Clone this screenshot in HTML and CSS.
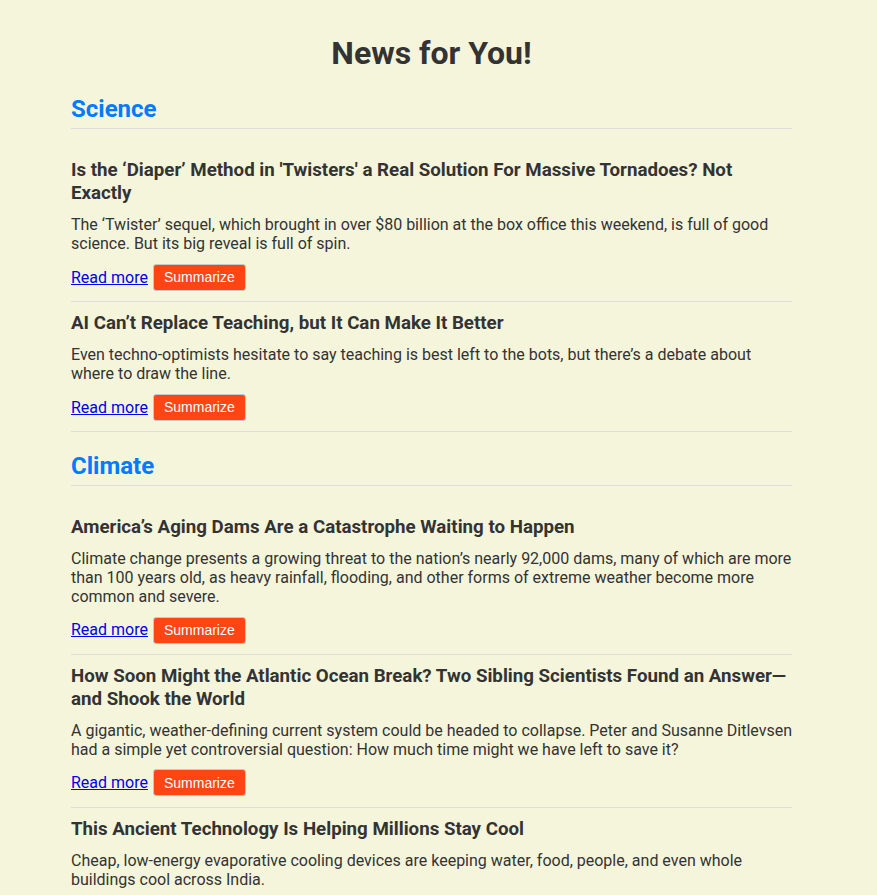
FILE: index.html
```html
<!DOCTYPE html>
<html lang="en">
<head>
<meta charset="utf-8">
<title>News for You!</title>
<link rel="stylesheet" href="styles.css">
</head>
<body>
<main class="page">
  <h1 class="title">News for You!</h1>

  <section class="category">
    <h2 class="category-title">Science</h2>
    <article class="story">
      <h3 class="story-title">Is the ‘Diaper’ Method in 'Twisters' a Real Solution For Massive Tornadoes? Not Exactly</h3>
      <p class="story-desc">The ‘Twister’ sequel, which brought in over $80 billion at the box office this weekend, is full of good science. But its big reveal is full of spin.</p>
      <div class="story-actions"><a href="#" class="read-more">Read more</a><button class="summarize">Summarize</button></div>
    </article>
    <article class="story">
      <h3 class="story-title">AI Can’t Replace Teaching, but It Can Make It Better</h3>
      <p class="story-desc">Even techno-optimists hesitate to say teaching is best left to the bots, but there’s a debate about where to draw the line.</p>
      <div class="story-actions"><a href="#" class="read-more">Read more</a><button class="summarize">Summarize</button></div>
    </article>
  </section>

  <section class="category">
    <h2 class="category-title">Climate</h2>
    <article class="story">
      <h3 class="story-title">America’s Aging Dams Are a Catastrophe Waiting to Happen</h3>
      <p class="story-desc">Climate change presents a growing threat to the nation’s nearly 92,000 dams, many of which are more than 100 years old, as heavy rainfall, flooding, and other forms of extreme weather become more common and severe.</p>
      <div class="story-actions"><a href="#" class="read-more">Read more</a><button class="summarize">Summarize</button></div>
    </article>
    <article class="story">
      <h3 class="story-title">How Soon Might the Atlantic Ocean Break? Two Sibling Scientists Found an Answer—and Shook the World</h3>
      <p class="story-desc">A gigantic, weather-defining current system could be headed to collapse. Peter and Susanne Ditlevsen had a simple yet controversial question: How much time might we have left to save it?</p>
      <div class="story-actions"><a href="#" class="read-more">Read more</a><button class="summarize">Summarize</button></div>
    </article>
    <article class="story">
      <h3 class="story-title">This Ancient Technology Is Helping Millions Stay Cool</h3>
      <p class="story-desc">Cheap, low-energy evaporative cooling devices are keeping water, food, people, and even whole buildings cool across India.</p>
      <div class="story-actions"><a href="#" class="read-more">Read more</a><button class="summarize">Summarize</button></div>
    </article>
  </section>
</main>
</body>
</html>
```

FILE: styles.css
```css
html, body {
  margin: 0;
  padding: 0;
  background: #f5f5dc;
}

body {
  font-family: Roboto, "Liberation Sans", Arial, sans-serif;
  font-size: 16px;
  line-height: 1.2;
  color: #333;
}

.page {
  width: 721px;
  margin-left: 71px;
  padding-top: 34px;
}

.title {
  margin: 0 0 23px;
  font-size: 32px;
  font-weight: 700;
  text-align: center;
  color: #333;
}

.category-title {
  margin: 0 0 20px;
  padding-bottom: 4px;
  border-bottom: 1px solid #ddd;
  font-size: 24px;
  font-weight: 700;
  color: #007bff;
}

.category + .category .category-title {
  margin-top: 20px;
}

.story {
  padding: 10px 0;
  border-bottom: 1px solid #ddd;
}

.story-title {
  margin: 0 0 10px;
  font-size: 1.17em;
  line-height: 23px;
  font-weight: 700;
  color: #333;
}

.story-desc {
  margin: 0 -2px 10px 0;
}

.story-actions {
  display: flex;
  align-items: center;
  gap: 5px;
  height: 27.5px;
}

.read-more {
  color: #0000ee;
  text-decoration: underline;
}

.summarize {
  font-family: "Liberation Sans", Arial, sans-serif;
  font-size: 14px;
  color: #fff;
  background: #ff4513;
  border: 1px solid #c8c8c8;
  border-radius: 3px;
  padding: 4px 10px;
  height: 27px;
  line-height: 16px;
}
```
